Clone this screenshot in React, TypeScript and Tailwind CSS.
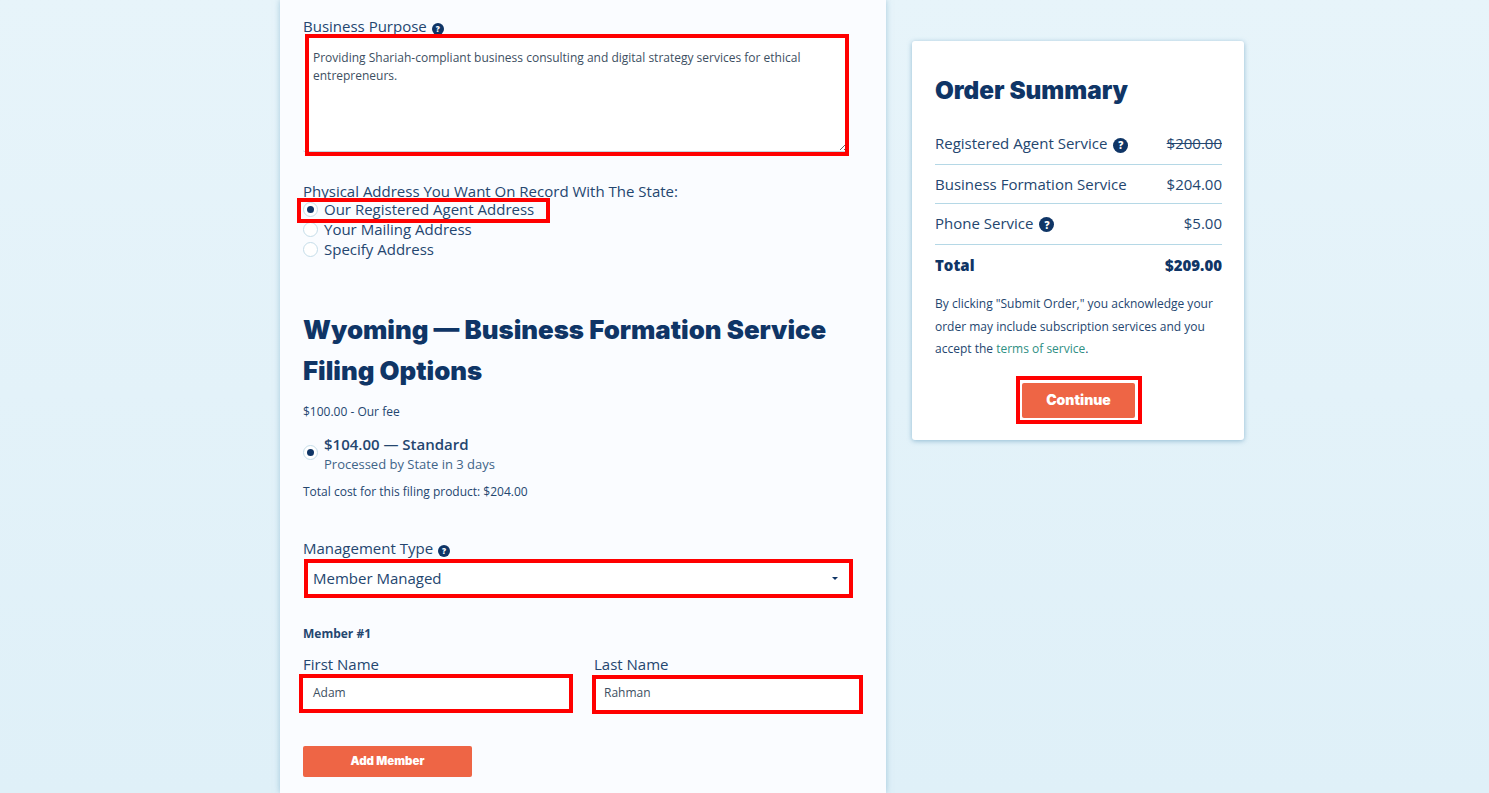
import type { ReactNode } from 'react'

const heading = "font-['Inter',sans-serif] font-black text-[#0f3566]"

function Marked({ className, fit, children }: { className: string; fit?: boolean; children: ReactNode }) {
  // red review box drawn over the field
  return (
    <div className={fit ? 'relative w-fit' : 'relative'}>
      {children}
      <span className={`pointer-events-none absolute border-4 border-[#ff0000] ${className}`} />
    </div>
  )
}

function Help({ size = 'small' }: { size?: 'small' | 'large' }) {
  return (
    <span
      className={
        size === 'large'
          ? 'ml-[6px] inline-flex h-[15px] w-[15px] items-center justify-center rounded-full bg-[#0f3566] align-[0px] text-[10px] leading-none font-extrabold text-white'
          : 'ml-[5px] inline-flex h-[12px] w-[12px] items-center justify-center rounded-full bg-[#0f3566] align-[0px] text-[8px] leading-none font-extrabold text-white'
      }
    >
      ?
    </span>
  )
}

function Radio({ checked = false, className = '' }: { checked?: boolean; className?: string }) {
  return (
    <span className={`flex h-[15px] w-[15px] shrink-0 items-center justify-center rounded-full border border-[#c5dde9] bg-white ${className}`}>
      {checked && <span className="h-[7px] w-[7px] rounded-full bg-[#0f3566]" />}
    </span>
  )
}

function RadioRow({ label, checked }: { label: string; checked?: boolean }) {
  return (
    <div className="flex h-[20px] items-center gap-[6px] text-[15px] text-[#24466f]">
      <Radio checked={checked} />
      <span>{label}</span>
    </div>
  )
}

function SummaryRow({ label, price, help, struck, className = 'pb-[2px]' }: { label: string; price: string; help?: boolean; struck?: boolean; className?: string }) {
  return (
    <div className={`flex items-center justify-between border-b border-[#b5d8e6] text-[15px] text-[#24466f] ${className}`}>
      <span>
        {label}
        {help && <Help size="large" />}
      </span>
      <span className={struck ? 'line-through' : ''}>{price}</span>
    </div>
  )
}

export default function App() {
  return (
    <div className="h-[793px] overflow-hidden bg-gradient-to-b from-[#e7f4fa] to-[#dff0f8] pl-[280px] font-['Open_Sans',sans-serif]">
      <div className="flex items-start gap-[26px]">
        <main className="h-[793px] w-[606px] shrink-0 bg-[#fafcff] px-[23px] pt-[16px] shadow-[0_0_6px_rgba(110,165,195,0.55)]">
          <label className="block h-[20px] text-[15px] leading-[20px] text-[#24466f]">
            Business Purpose
            <Help />
          </label>
          <Marked fit className="-top-[2px] -right-[1px] -bottom-[4px] left-[2px]">
            <textarea
              readOnly
              value="Providing Shariah-compliant business consulting and digital strategy services for ethical entrepreneurs."
              className="block h-[116px] w-[545px] rounded-[2px] border-b border-[#c5d6df] bg-white px-[10px] py-[13px] text-[12px] leading-[18px] text-[#3d4f62] outline-none"
            />
          </Marked>

          <p className="mt-[31px] text-[15px] leading-[16px] text-[#24466f]">Physical Address You Want On Record With The State:</p>
          <Marked className="-top-[1px] left-[-6px] h-[25px] w-[253px]">
            <RadioRow label="Our Registered Agent Address" checked />
          </Marked>
          <RadioRow label="Your Mailing Address" />
          <RadioRow label="Specify Address" />

          <h2 className={`mt-[50px] text-[25.8px] leading-[41px] ${heading}`}>
            Wyoming — Business Formation Service
            <br />
            Filing Options
          </h2>
          <p className="mt-[13px] text-[12px] leading-[16px] text-[#24466f]">$100.00 - Our fee</p>
          <div className="mt-[14px] flex items-center gap-[6px]">
            <Radio checked className="mb-[4px]" />
            <div>
              <div className="text-[15px] leading-[20px] font-semibold text-[#24466f]">$104.00 — Standard</div>
              <div className="text-[13px] leading-[20px] text-[#3f6488]">Processed by State in 3 days</div>
            </div>
          </div>
          <p className="mt-[10px] text-[12px] leading-[16px] text-[#24466f]">Total cost for this filing product: $204.00</p>

          <label className="mt-[38px] block h-[23px] text-[15px] leading-[20px] text-[#24466f]">
            Management Type
            <Help />
          </label>
          <Marked fit className="-top-[2px] -right-[3px] -bottom-[2px] left-[1px]">
            <div className="flex h-[35px] w-[547px] items-center justify-between bg-white px-[10px] text-[15px] text-[#24466f]">
              Member Managed
              <span className="mr-[2px] h-0 w-0 border-x-[3px] border-t-[3px] border-x-transparent border-t-[#0f3566]" />
            </div>
          </Marked>

          <p className="mt-[30px] text-[12px] leading-[16px] font-bold text-[#24466f]">Member #1</p>
          <div className="mt-[14px] grid grid-cols-[267px_267px] gap-[24px]">
            <div>
              <label className="block h-[18px] text-[15px] leading-[17px] text-[#24466f]">First Name</label>
              <Marked className="top-0 -right-[3px] -bottom-[3px] -left-[4px]">
                <div className="flex h-[36px] items-center bg-white px-[10px] pt-[1px] text-[12px] text-[#3d4f62]">Adam</div>
              </Marked>
            </div>
            <div>
              <label className="block h-[18px] text-[15px] leading-[17px] text-[#24466f]">Last Name</label>
              <Marked className="top-[1px] -right-[2px] -bottom-[4px] -left-[2px]">
                <div className="flex h-[36px] items-center bg-white px-[10px] pt-[1px] text-[12px] text-[#3d4f62]">Rahman</div>
              </Marked>
            </div>
          </div>
          <button className={`mt-[36px] h-[31px] w-[169px] rounded-[2px] bg-[#ee6545] text-[11.5px] ${heading} !text-white`}>
            Add Member
          </button>
        </main>

        <aside className="mt-[41px] flex h-[399px] w-[332px] shrink-0 flex-col rounded-[3px] bg-white pt-[31px] pr-[22px] pl-[23px] shadow-[0_1px_5px_rgba(90,150,185,0.6)]">
          <h2 className={`text-[24.3px] leading-[36px] ${heading}`}>Order Summary</h2>
          <div className="mt-[17px] grid grid-rows-[40px_39px_41px]">
            <SummaryRow label="Registered Agent Service" price="$200.00" help struck />
            <SummaryRow label="Business Formation Service" price="$204.00" className="pt-[1px]" />
            <SummaryRow label="Phone Service" price="$5.00" help />
          </div>
          <div className="mt-[10px] flex justify-between text-[15px] leading-[20px] font-extrabold text-[#0f3566]">
            <span>Total</span>
            <span>$209.00</span>
          </div>
          <p className="mt-[18px] text-[12px] leading-[22.5px] text-[#24466f]">
            By clicking "Submit Order," you acknowledge your order may include subscription services and you accept the{' '}
            <a className="text-[#2f8f83]">terms of service</a>.
          </p>
          <div className="mt-[22px] flex justify-center">
            <Marked className="-top-[7px] -right-[7px] -bottom-[6px] -left-[6px]">
              <button className={`block h-[35px] w-[113px] rounded-[2px] bg-[#ee6545] pb-[2px] text-[14px] ${heading} !text-white`}>
                Continue
              </button>
            </Marked>
          </div>
        </aside>
      </div>
    </div>
  )
}
